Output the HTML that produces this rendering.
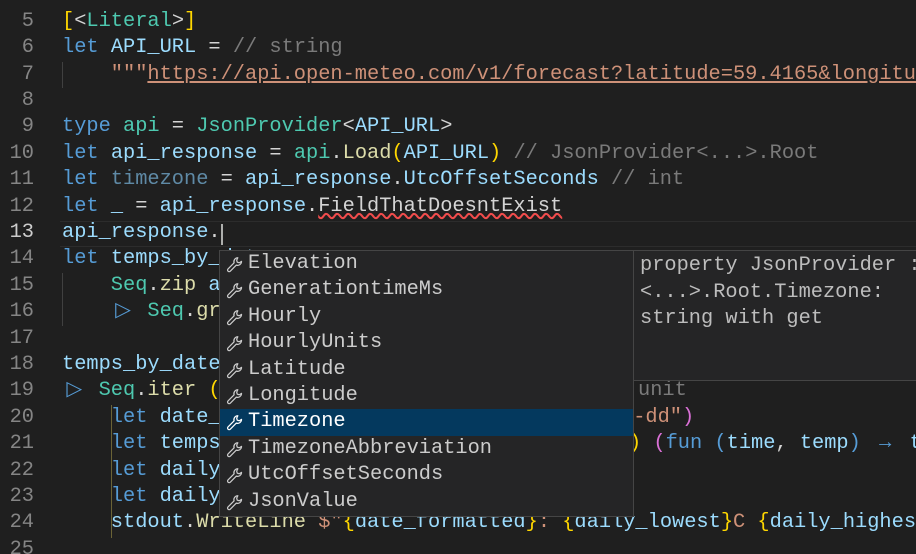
<!DOCTYPE html>
<html><head><meta charset="utf-8"><style>
html,body{margin:0;padding:0;background:#1f1f1f;width:916px;height:554px;overflow:hidden;position:relative}
.l{position:absolute;left:0;width:916px;overflow:hidden;height:26.4px;line-height:26.4px;white-space:pre;font-family:"Liberation Mono",monospace;font-size:20.33px;color:#d4d4d4}
.n{position:absolute;width:34px;text-align:right;color:#858585;font-family:"Liberation Mono",monospace;font-size:20.33px;height:26.4px;line-height:26.4px}
.t{position:absolute;left:62px}
.a{position:absolute}
.k{color:#569cd6}.v{color:#9cdcfe}.ty{color:#4ec9b0}.f{color:#dcdcaa}.s{color:#ce9178}.c{color:#7a7a7a}.y{color:#ffd700}.p{color:#da70d6}.dim{color:#5f8aa6}.w{color:#d4d4d4}
.lg{display:inline-block;width:24.4px;text-align:center;color:#569cd6}
.g{position:absolute;width:1px;background:#404040}
#pop{position:absolute;left:219px;top:250px;width:415px;height:267px;background:#252526;border:1px solid #454545;box-sizing:border-box}
#det{position:absolute;left:634px;top:250px;width:290px;height:131px;background:#252526;border:1px solid #454545;border-left:none;box-sizing:border-box;font-family:"Liberation Mono",monospace;font-size:20.33px;color:#bdbdbd;line-height:26.6px;padding:2px 0 0 6px;white-space:pre}
.it{position:absolute;left:0;width:413px;height:26.4px;line-height:26.4px;font-family:"Liberation Mono",monospace;font-size:20.33px;color:#cccccc;white-space:pre}
.it svg{position:absolute;left:6px;top:5px}
.it span{position:absolute;left:28px}
.sel{background:#04395e;color:#fff}
</style></head><body>
<div class="g" style="left:62px;top:62px;height:26px"></div>
<div class="g" style="left:62px;top:273px;height:53px"></div>
<div class="g" style="left:111px;top:405px;height:133px;background:#6b6336"></div>
<div style="position:absolute;left:60px;top:221px;width:856px;height:26px;border-top:1px solid #2c2c2c;border-bottom:1px solid #2c2c2c;box-sizing:border-box"></div>

<div class="n" style="top:-17.6px">4</div>
<div class="n" style="top:8.8px">5</div>
<div class="n" style="top:35.2px">6</div>
<div class="n" style="top:61.6px">7</div>
<div class="n" style="top:88px">8</div>
<div class="n" style="top:114.4px">9</div>
<div class="n" style="top:140.8px">10</div>
<div class="n" style="top:167.2px">11</div>
<div class="n" style="top:193.6px">12</div>
<div class="n" style="top:220px;color:#ccc">13</div>
<div class="n" style="top:246.4px">14</div>
<div class="n" style="top:272.8px">15</div>
<div class="n" style="top:299.2px">16</div>
<div class="n" style="top:325.6px">17</div>
<div class="n" style="top:352px">18</div>
<div class="n" style="top:378.4px">19</div>
<div class="n" style="top:404.8px">20</div>
<div class="n" style="top:431.2px">21</div>
<div class="n" style="top:457.6px">22</div>
<div class="n" style="top:484px">23</div>
<div class="n" style="top:510.4px">24</div>
<div class="n" style="top:536.8px">25</div>

<div class="l" style="top:8.8px"><span class="t"><span class="y">[</span><span class="w">&lt;</span><span class="ty">Literal</span><span class="w">&gt;</span><span class="y">]</span></span></div>
<div class="l" style="top:35.2px"><span class="t"><span class="k">let</span> <span class="v">API_URL</span> = <span class="c">// string</span></span></div>
<div class="l" style="top:61.6px"><span class="t"><span class="s">    """<span style="text-decoration:underline">https://api.open-meteo.com/v1/forecast?latitude=59.4165&amp;longitude=24.7</span></span></span></div>
<div class="l" style="top:114.4px"><span class="t"><span class="k">type</span> <span class="ty">api</span> = <span class="ty">JsonProvider</span>&lt;<span class="v">API_URL</span>&gt;</span></div>
<div class="l" style="top:140.8px"><span class="t"><span class="k">let</span> <span class="v">api_response</span> = <span class="ty">api</span>.<span class="f">Load</span><span class="y">(</span><span class="v">API_URL</span><span class="y">)</span> <span class="c">// JsonProvider&lt;...&gt;.Root</span></span></div>
<div class="l" style="top:167.2px"><span class="t"><span class="k">let</span> <span class="dim">timezone</span> = <span class="v">api_response</span>.<span class="v">UtcOffsetSeconds</span> <span class="c">// int</span></span></div>
<div class="l" style="top:193.6px"><span class="t"><span class="k">let</span> <span class="v">_</span> = <span class="v">api_response</span>.<span style="text-decoration:underline wavy #f14c4c">FieldThatDoesntExist</span></span></div>
<div class="l" style="top:220px"><span class="t"><span class="v">api_response</span>.</span></div>
<div style="position:absolute;left:221px;top:224px;width:2px;height:21px;background:#aeafad"></div>
<div class="l" style="top:246.4px"><span class="t"><span class="k">let</span> <span class="v">temps_by_date</span></span></div>
<div class="l" style="top:272.8px"><span class="t">    <span class="ty">Seq</span>.<span class="f">zip</span> <span class="v">api</span></span></div>
<div class="l" style="top:299.2px"><span class="t">    <span class="lg">▷</span> <span class="ty">Seq</span>.<span class="f">groupBy</span></span></div>
<div class="l" style="top:352px"><span class="t"><span class="v">temps_by_date</span></span></div>
<div class="l" style="top:378.4px"><span class="t"><span class="lg">▷</span> <span class="ty">Seq</span>.<span class="f">iter</span> <span class="y">(</span><span class="k">fun</span></span><span class="a c" style="left:638px">unit</span></div>
<div class="l" style="top:404.8px"><span class="t">    <span class="k">let</span> <span class="v">date_formatted</span></span><span class="a" style="left:621px"><span class="s">M-dd"</span><span class="p">)</span></span></div>
<div class="l" style="top:431.2px"><span class="t">    <span class="k">let</span> <span class="v">temps</span></span><span class="a" style="left:629px"><span class="y">)</span> <span class="p">(</span><span class="k">fun</span> <span class="k">(</span><span class="v">time</span>, <span class="v">temp</span><span class="k">)</span> <span class="lg">→</span> <span class="v">temp</span></span></div>
<div class="l" style="top:457.6px"><span class="t">    <span class="k">let</span> <span class="v">daily_lowest</span></span></div>
<div class="l" style="top:484px"><span class="t">    <span class="k">let</span> <span class="v">daily_highest</span></span></div>
<div class="l" style="top:510.4px"><span class="t">    <span class="v">stdout</span>.<span class="f">WriteLine</span> <span class="s">$"</span><span class="y">{</span><span class="v">date_formatted</span><span class="y">}</span><span class="s">: </span><span class="y">{</span><span class="v">daily_lowest</span><span class="y">}</span><span class="s">C </span><span class="y">{</span><span class="v">daily_highest</span></span></div>

<div id="pop">
<div class="it" style="top:0px"><svg width="18" height="18" viewBox="0 0 16 16"><path d="M10.5 1.5a3.5 3.5 0 0 0-3.3 4.6L1.8 11.5a1.4 1.4 0 0 0 2 2l5.4-5.4a3.5 3.5 0 0 0 4.6-3.3l-2 1.2-1.8-.5-.5-1.8z" fill="none" stroke="#ccc" stroke-width="1.1" stroke-linejoin="round"/></svg><span>Elevation</span></div>
<div class="it" style="top:26.4px"><svg width="18" height="18" viewBox="0 0 16 16"><path d="M10.5 1.5a3.5 3.5 0 0 0-3.3 4.6L1.8 11.5a1.4 1.4 0 0 0 2 2l5.4-5.4a3.5 3.5 0 0 0 4.6-3.3l-2 1.2-1.8-.5-.5-1.8z" fill="none" stroke="#ccc" stroke-width="1.1" stroke-linejoin="round"/></svg><span>GenerationtimeMs</span></div>
<div class="it" style="top:52.8px"><svg width="18" height="18" viewBox="0 0 16 16"><path d="M10.5 1.5a3.5 3.5 0 0 0-3.3 4.6L1.8 11.5a1.4 1.4 0 0 0 2 2l5.4-5.4a3.5 3.5 0 0 0 4.6-3.3l-2 1.2-1.8-.5-.5-1.8z" fill="none" stroke="#ccc" stroke-width="1.1" stroke-linejoin="round"/></svg><span>Hourly</span></div>
<div class="it" style="top:79.2px"><svg width="18" height="18" viewBox="0 0 16 16"><path d="M10.5 1.5a3.5 3.5 0 0 0-3.3 4.6L1.8 11.5a1.4 1.4 0 0 0 2 2l5.4-5.4a3.5 3.5 0 0 0 4.6-3.3l-2 1.2-1.8-.5-.5-1.8z" fill="none" stroke="#ccc" stroke-width="1.1" stroke-linejoin="round"/></svg><span>HourlyUnits</span></div>
<div class="it" style="top:105.6px"><svg width="18" height="18" viewBox="0 0 16 16"><path d="M10.5 1.5a3.5 3.5 0 0 0-3.3 4.6L1.8 11.5a1.4 1.4 0 0 0 2 2l5.4-5.4a3.5 3.5 0 0 0 4.6-3.3l-2 1.2-1.8-.5-.5-1.8z" fill="none" stroke="#ccc" stroke-width="1.1" stroke-linejoin="round"/></svg><span>Latitude</span></div>
<div class="it" style="top:132px"><svg width="18" height="18" viewBox="0 0 16 16"><path d="M10.5 1.5a3.5 3.5 0 0 0-3.3 4.6L1.8 11.5a1.4 1.4 0 0 0 2 2l5.4-5.4a3.5 3.5 0 0 0 4.6-3.3l-2 1.2-1.8-.5-.5-1.8z" fill="none" stroke="#ccc" stroke-width="1.1" stroke-linejoin="round"/></svg><span>Longitude</span></div>
<div class="it sel" style="top:158.4px"><svg width="18" height="18" viewBox="0 0 16 16"><path d="M10.5 1.5a3.5 3.5 0 0 0-3.3 4.6L1.8 11.5a1.4 1.4 0 0 0 2 2l5.4-5.4a3.5 3.5 0 0 0 4.6-3.3l-2 1.2-1.8-.5-.5-1.8z" fill="none" stroke="#fff" stroke-width="1.1" stroke-linejoin="round"/></svg><span>Timezone</span></div>
<div class="it" style="top:184.8px"><svg width="18" height="18" viewBox="0 0 16 16"><path d="M10.5 1.5a3.5 3.5 0 0 0-3.3 4.6L1.8 11.5a1.4 1.4 0 0 0 2 2l5.4-5.4a3.5 3.5 0 0 0 4.6-3.3l-2 1.2-1.8-.5-.5-1.8z" fill="none" stroke="#ccc" stroke-width="1.1" stroke-linejoin="round"/></svg><span>TimezoneAbbreviation</span></div>
<div class="it" style="top:211.2px"><svg width="18" height="18" viewBox="0 0 16 16"><path d="M10.5 1.5a3.5 3.5 0 0 0-3.3 4.6L1.8 11.5a1.4 1.4 0 0 0 2 2l5.4-5.4a3.5 3.5 0 0 0 4.6-3.3l-2 1.2-1.8-.5-.5-1.8z" fill="none" stroke="#ccc" stroke-width="1.1" stroke-linejoin="round"/></svg><span>UtcOffsetSeconds</span></div>
<div class="it" style="top:237.6px"><svg width="18" height="18" viewBox="0 0 16 16"><path d="M10.5 1.5a3.5 3.5 0 0 0-3.3 4.6L1.8 11.5a1.4 1.4 0 0 0 2 2l5.4-5.4a3.5 3.5 0 0 0 4.6-3.3l-2 1.2-1.8-.5-.5-1.8z" fill="none" stroke="#ccc" stroke-width="1.1" stroke-linejoin="round"/></svg><span>JsonValue</span></div>
</div>
<div id="det">property JsonProvider :
&lt;...&gt;.Root.Timezone:
string with get</div>
</body></html>
